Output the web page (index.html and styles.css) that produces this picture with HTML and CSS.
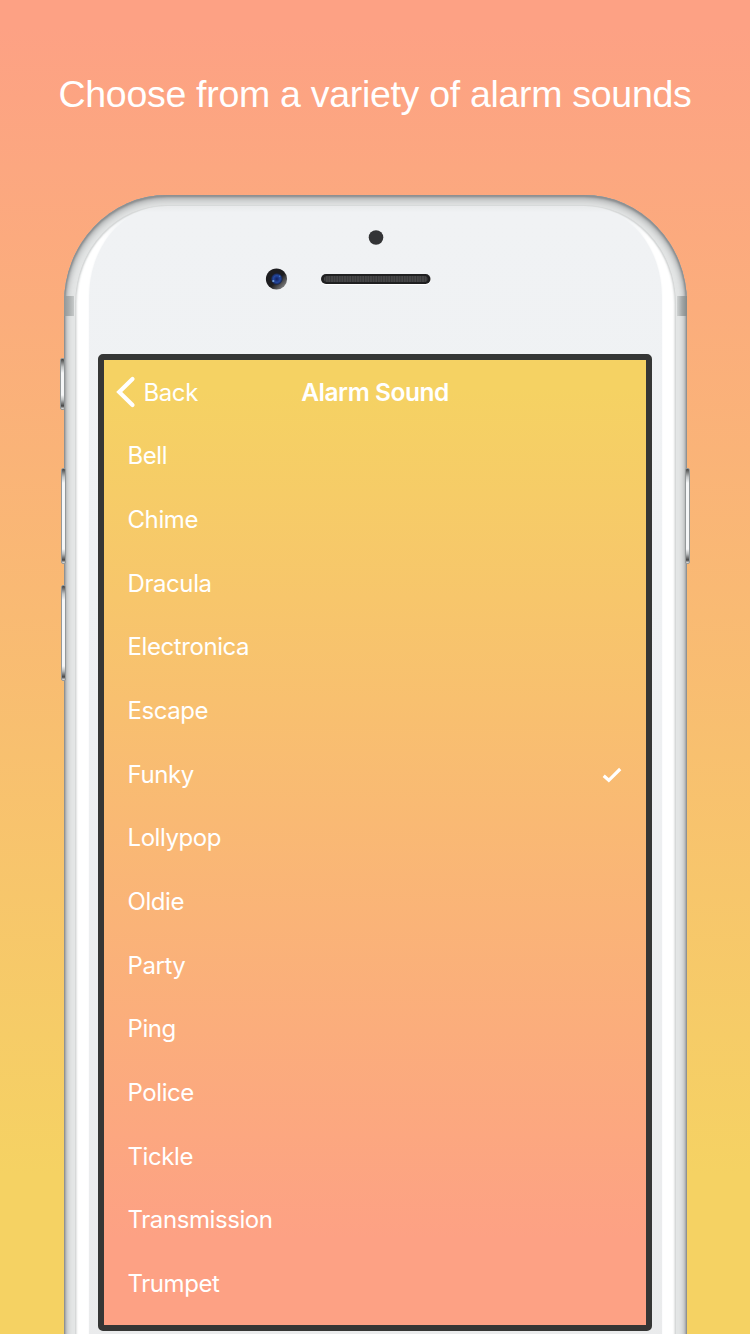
FILE: index.html
```html
<!DOCTYPE html>
<html lang="en">
<head>
<meta charset="utf-8">
<title>Alarm Sound</title>
<link rel="stylesheet" href="styles.css">
</head>
<body>
<main class="poster">
  <h1 class="headline"><span>Choose from a variety of alarm sounds</span></h1>
  <div class="phone">
    <i class="key key-mute"></i>
    <i class="key key-up"></i>
    <i class="key key-down"></i>
    <i class="key key-power"></i>
    <div class="shell">
      <i class="antenna antenna-left"></i>
      <i class="antenna antenna-right"></i>
      <div class="band">
        <div class="face">
          <svg class="sensors" width="573" height="148" viewBox="89 207 573 148">
            <defs>
              <pattern id="mesh" width="2.6" height="4" patternUnits="userSpaceOnUse"><rect width="2.6" height="4" fill="#484849"/><rect width="1" height="4" fill="#353536"/></pattern>
              <linearGradient id="ring" x1="0" y1="0" x2="1" y2="1"><stop offset=".55" stop-color="#1d1d20"/><stop offset="1" stop-color="#aaa"/></linearGradient>
              <radialGradient id="lens"><stop offset="0" stop-color="#12205e"/><stop offset=".6" stop-color="#2448a0"/><stop offset="1" stop-color="#182347"/></radialGradient>
            </defs>
            <circle cx="376" cy="237.5" r="7.3" fill="#333436"/>
            <circle cx="276.5" cy="279" r="10.6" fill="url(#ring)"/>
            <circle cx="276.8" cy="279" r="5.7" fill="url(#lens)"/>
            <circle cx="273.3" cy="281" r="1.1" fill="#7ba4d5"/>
            <circle cx="279.7" cy="276.3" r=".8" fill="#4a79c6"/>
            <rect x="320.8" y="275" width="110" height="10" rx="5" fill="#fff"/>
            <rect x="321" y="274" width="109.5" height="10" rx="5" fill="#202021"/>
            <rect x="324" y="276" width="103.5" height="6" rx="3" fill="url(#mesh)"/>
          </svg>
          <section class="screen">
            <header class="nav">
              <a class="back"><svg width="20" height="32" viewBox="0 0 20 32"><path d="M16.5 3 3.2 16 16.5 29" fill="none" stroke="#fff" stroke-width="4.2" stroke-linecap="round"/></svg><span>Back</span></a>
              <h2 class="title">Alarm Sound</h2>
            </header>
            <ul class="sounds">
              <li>Bell</li>
              <li>Chime</li>
              <li>Dracula</li>
              <li>Electronica</li>
              <li>Escape</li>
              <li>Funky<svg class="check" width="20" height="16" viewBox="0 0 20 16"><path d="M1.7 8.8 6.8 13.3 18.2 2" fill="none" stroke="#fff" stroke-width="3.2"/></svg></li>
              <li>Lollypop</li>
              <li>Oldie</li>
              <li>Party</li>
              <li>Ping</li>
              <li>Police</li>
              <li>Tickle</li>
              <li>Transmission</li>
              <li>Trumpet</li>
            </ul>
          </section>
        </div>
      </div>
    </div>
  </div>
</main>
</body>
</html>
```
FILE: styles.css
```css
* { box-sizing: border-box; }
body { margin: 0; }
.poster {
  width: 750px;
  height: 1334px;
  overflow: hidden;
  background: linear-gradient(180deg, #fda184 0%, #fda184 2%, #f5d263 88%, #f5d263 100%);
  color: #fff;
}
.headline {
  display: flex;
  justify-content: center;
  align-items: center;
  height: 195px;
  margin: 0;
  padding-bottom: 7px;
  font: 400 37.5px/44px "Liberation Sans", Arial, sans-serif;
  letter-spacing: -0.3px;
  white-space: nowrap;
}
.phone { position: relative; width: 623px; margin-left: 64px; }
.shell {
  position: relative;
  height: 1300px;
  padding: 10px 11px 0;
  border-radius: 103px 103px 0 0 / 108px 108px 0 0;
  background: #e4e6e6;
  box-shadow: inset 0 2px 2px #8d9092, inset 1px 0 2px #85888a, inset -1px 0 2px #85888a, inset 0 4px 8px #a3a5a6, inset 2px 0 5px #b6b9ba, inset -2px 0 5px #b6b9ba;
}
.band {
  height: 100%;
  padding: 2px 14px 0;
  border-radius: 92px 92px 0 0 / 98px 98px 0 0;
  background: linear-gradient(180deg, #eceeef 0, #f0f2f4 10px, #fff 34px);
  box-shadow: inset 1px 1px 1px #d5d7d7, inset -1px 1px 1px #d5d7d7, inset 2px 0 2px #e3e5e5, inset -2px 0 2px #e3e5e5;
}
.face {
  height: 100%;
  padding: 0 0 0 9px;
  border-radius: 74px 74px 0 0 / 90px 90px 0 0;
  background: linear-gradient(180deg, #e9ebec 0, #f0f2f4 5px, #eff1f3 30%, #e9eaeb);
  box-shadow: 0 0 2px #f2f4f5;
}
.sensors { display: block; margin: 0 0 -1px -9px; }
.screen {
  width: 554px;
  height: 977px;
  border: 6px solid #353635;
  border-radius: 5px;
  background: linear-gradient(180deg, #f5d263 0%, #f5d263 3%, #fda184 91%, #fda184 100%);
  font: 400 24px/1 Inter, "Liberation Sans", sans-serif;
  letter-spacing: -0.42px;
}
.nav {
  display: grid;
  grid-template-columns: 1fr auto 1fr;
  align-items: center;
  height: 64px;
}
.back { display: flex; align-items: center; gap: 7.5px; padding-left: 12px; }
.back span { padding-top: 1px; }
.title { margin: 0; font-size: 24.5px; font-weight: 600; letter-spacing: -0.45px; }
.sounds { margin: 0; padding: 0; list-style: none; }
.sounds li {
  display: flex;
  align-items: center;
  justify-content: space-between;
  height: 63.7px;
  padding: 0.6px 24px 0 23.5px;
}
.check { margin-top: 1px; }
.antenna {
  position: absolute;
  top: 101px;
  width: 10px;
  height: 20px;
}
.antenna-left { left: 0; background: linear-gradient(90deg, #929797, #a9adad 50%, #c6c9c9); }
.antenna-right { right: 0; background: linear-gradient(270deg, #858a8a, #a4a8a8 50%, #d0d3d3); }
.key {
  position: absolute;
  z-index: 1;
  width: 5px;
  border: 1px solid #949899;
  border-radius: 2px;
  background: linear-gradient(180deg, #444 0, #c4c7c8 8px, #f5f6f7 14px, #f5f6f7 calc(100% - 14px), #b9bcbd calc(100% - 9px), #444 calc(100% - 3px), #eee 100%);
}
.key-mute { left: -4px; top: 163px; height: 52px; }
.key-up { left: -3px; top: 273px; height: 96px; }
.key-down { left: -3px; top: 390px; height: 96px; }
.key-power { right: -3px; top: 273px; height: 96px; }
```
